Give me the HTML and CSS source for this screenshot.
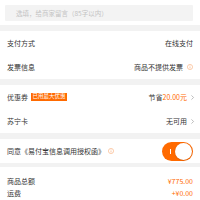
FILE: index.html
```html
<!DOCTYPE html>
<html>
<head>
<meta charset="utf-8">
<link rel="stylesheet" href="styles.css">
</head>
<body>
<div class="page">
  <div class="memo">
    <div class="memo-box">选填，给商家留言（85字以内）</div>
  </div>
  <div class="gap"></div>
  <div class="row"><span class="label">支付方式</span><span class="value">在线支付</span></div>
  <div class="row"><span class="label">发票信息</span><span class="value">商品不提供发票<svg class="info" viewBox="0 0 10 10"><circle cx="5" cy="5" r="4.3" fill="none" stroke="#f7a46a" stroke-width="0.9"/><rect x="4.5" y="4.2" width="1" height="3.2" fill="#f7a46a"/><rect x="4.5" y="2.5" width="1" height="1" fill="#f7a46a"/></svg></span></div>
  <div class="gap"></div>
  <div class="row"><span class="label">优惠券<span class="badge">已用最大优惠</span></span><span class="value">节省<span class="orange">20.00元</span><svg class="chev" viewBox="0 0 6 10"><path d="M1.5 2 L4.5 5 L1.5 8" fill="none" stroke="#999" stroke-width="0.9"/></svg></span></div>
  <div class="row"><span class="label">苏宁卡</span><span class="value">无可用<svg class="chev" viewBox="0 0 6 10"><path d="M1.5 2 L4.5 5 L1.5 8" fill="none" stroke="#999" stroke-width="0.9"/></svg></span></div>
  <div class="gap"></div>
  <div class="row"><span class="label">同意《易付宝信息调用授权函》<svg class="info info-l" viewBox="0 0 10 10"><circle cx="5" cy="5" r="4.3" fill="none" stroke="#f7a46a" stroke-width="0.9"/><rect x="4.5" y="4.2" width="1" height="3.2" fill="#f7a46a"/><rect x="4.5" y="2.5" width="1" height="1" fill="#f7a46a"/></svg></span><span class="toggle"><span class="bar"></span><span class="knob"></span></span></div>
  <div class="gap gap-s"></div>
  <div class="totals">
    <div class="trow"><span class="label">商品总额</span><span class="orange">¥775.00</span></div>
    <div class="trow"><span class="label">运费</span><span class="orange">+¥0.00</span></div>
  </div>
</div>
</body>
</html>
```
FILE: styles.css
```css
html, body {
  margin: 0;
  padding: 0;
  background: #fff;
}
.page {
  width: 200px;
  font-family: "Noto Sans CJK SC", "Noto Sans", sans-serif;
  font-size: 7px;
  color: #333;
}
.memo {
  padding: 5px 7px 4px 5px;
}
.memo-box {
  height: 16px;
  background: #f3f3f3;
  color: #c4c4c4;
  font-size: 6.5px;
  line-height: 16px;
  padding-left: 11px;
  border-radius: 1px;
}
.gap {
  height: 6px;
  background: #f2f2f2;
}
.gap-s {
  height: 4px;
}
.row {
  height: 24px;
  display: flex;
  align-items: center;
  justify-content: space-between;
  padding: 0 7px;
}
.label {
  display: flex;
  align-items: center;
}
.value {
  display: flex;
  align-items: center;
}
.orange {
  color: #ff6a00;
}
.badge {
  background: #ff6a00;
  color: #fff;
  font-size: 5.5px;
  line-height: 7.5px;
  padding: 0 1.5px;
  margin-left: 3px;
}
.info {
  width: 6px;
  height: 6px;
  margin-left: 4px;
}
.info-l {
  margin-left: 3px;
}
.chev {
  width: 5px;
  height: 7px;
  margin-left: 3px;
  margin-right: -2px;
}
.toggle {
  position: relative;
  width: 31px;
  height: 19px;
  border-radius: 10px;
  background: #ff6a00;
}
.bar {
  position: absolute;
  left: 8px;
  top: 7px;
  width: 1px;
  height: 5px;
  background: #fff;
}
.knob {
  position: absolute;
  right: 1px;
  top: 1px;
  width: 17px;
  height: 17px;
  border-radius: 50%;
  background: #fff;
  box-shadow: 0 0.5px 1.5px rgba(0,0,0,0.2);
}
.totals {
  padding: 8px 7px 0;
}
.trow {
  height: 12px;
  display: flex;
  align-items: center;
  justify-content: space-between;
}
```
